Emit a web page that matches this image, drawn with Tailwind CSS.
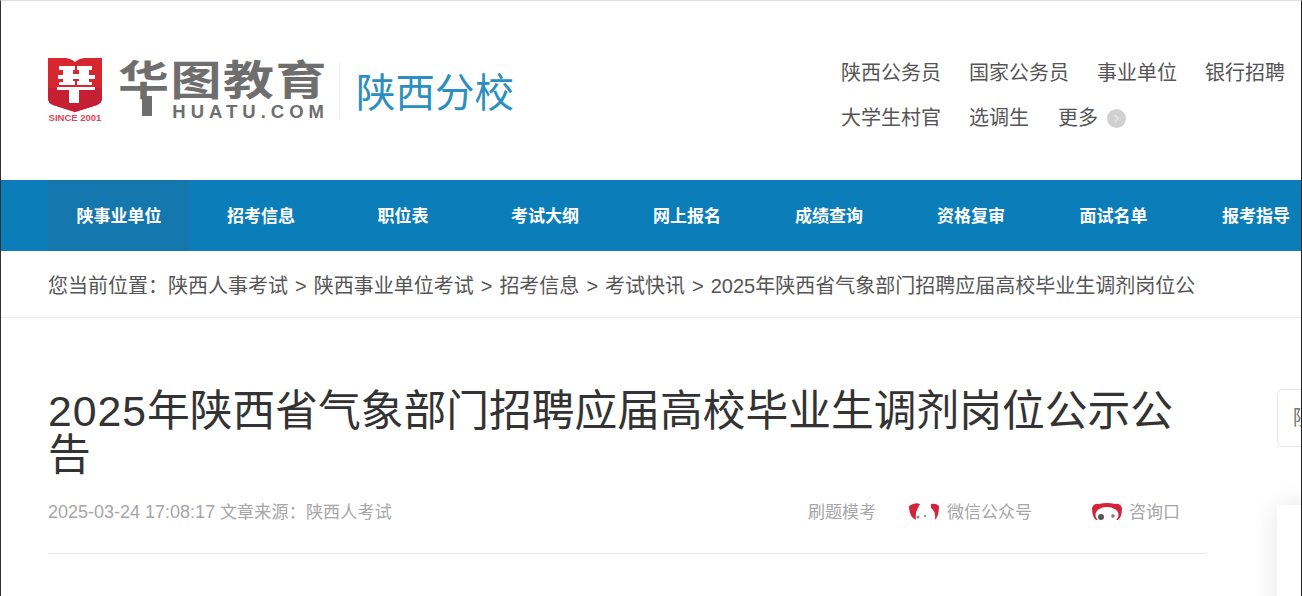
<!DOCTYPE html>
<html lang="zh-CN">
<head>
    <meta charset="UTF-8">
    <meta name="viewport" content="width=device-width, initial-scale=1.0">
    <title>2025年陕西省气象部门招聘应届高校毕业生调剂岗位公示公告</title>
    <script src="https://cdn.jsdelivr.net/npm/@tailwindcss/browser@4"></script>
</head>
<body class="bg-white overflow-hidden font-['Liberation_Sans','Noto_Sans_CJK_SC',sans-serif]">
<div class="relative w-[1302px] h-[596px] overflow-hidden border-l border-r border-t border-l-[#333] border-r-[#222] border-t-[#ddd]">

    <!-- header -->
    <header class="h-[179px] pl-[47px] flex justify-between">
        <div class="flex items-start pt-[57px]">
            <div class="w-[54px] flex flex-col items-center">
                <svg viewBox="0 0 54 54" class="w-[54px] h-[54px]">
                    <path d="M0 0H18Q24 1 27 4Q30 1 36 0H54V40Q54 45 49 47L27 54L5 47Q0 45 0 40Z" fill="#d8262f"/>
                    <path d="M0 30H54V40Q54 45 49 47L27 54L5 47Q0 45 0 40Z" fill="#c41f33"/>
                    <path d="M11 8H27V12H25V16H31V12H29V8H44V12H41V17H47V21H41V24H44V27H29V23H31V21H25V23H27V27H11V24H15V21H10V17H15V12H11Z" fill="#fff"/>
                    <path d="M9 29H47V32H31V45H21V32H9Z" fill="#fff"/>
                </svg>
                <span class="text-[9.5px] leading-[10px] font-bold text-[#d9475a] mt-[1px] whitespace-nowrap">SINCE 2001</span>
            </div>
            <div class="relative ml-[18px] w-[206px] h-[62px] flex flex-col items-end">
                <span class="mt-[4px] -mr-[2px] text-[51px] leading-[48px] font-bold text-[#6e6e6e] tracking-[1.5px] whitespace-nowrap origin-top scale-y-[0.8]">华图教育</span>
                <span class="absolute left-[22px] top-[38px] w-[10px] h-[20px] bg-[#6e6e6e]"></span>
                <span class="absolute right-0 top-[45px] text-[18.5px] leading-[18px] font-bold text-[#6e6e6e] tracking-[5px] -mr-[3px] whitespace-nowrap">HUATU.COM</span>
            </div>
            <div class="w-px h-[58px] bg-[#eeeeee] ml-[13px] mt-[4px]"></div>
            <span class="ml-[16px] mt-[11px] text-[39.5px] leading-[48px] text-[#2b8fc0] whitespace-nowrap">陕西分校</span>
        </div>
        <nav class="pt-[50px] pr-[16px] text-[#555] text-[20px] leading-[45px] w-[460px] shrink-0">
            <div class="flex justify-between whitespace-nowrap">
                <a>陕西公务员</a><a>国家公务员</a><a>事业单位</a><a>银行招聘</a>
            </div>
            <div class="flex items-center whitespace-nowrap">
                <a>大学生村官</a><a class="ml-[28px]">选调生</a><a class="ml-[29px]">更多</a>
                <span class="ml-[9px] w-[19px] h-[19px] rounded-full bg-[#d0d0d0] flex items-center justify-center">
                    <svg viewBox="0 0 10 10" class="w-[9px] h-[9px]"><path d="M3 1.5 7 5 3 8.5" fill="none" stroke="#e8e8e8" stroke-width="1.5"/></svg>
                </span>
            </div>
        </nav>
    </header>

    <!-- blue nav -->
    <div class="h-[71px] bg-[#0b7db8] pl-[47px] flex text-white text-[17px] font-bold whitespace-nowrap">
        <a class="w-[142px] shrink-0 pt-[2px] bg-[#1477ae] flex items-center justify-center">陕事业单位</a>
        <a class="w-[142px] shrink-0 pt-[2px] flex items-center justify-center">招考信息</a>
        <a class="w-[142px] shrink-0 pt-[2px] flex items-center justify-center">职位表</a>
        <a class="w-[142px] shrink-0 pt-[2px] flex items-center justify-center">考试大纲</a>
        <a class="w-[142px] shrink-0 pt-[2px] flex items-center justify-center">网上报名</a>
        <a class="w-[142px] shrink-0 pt-[2px] flex items-center justify-center">成绩查询</a>
        <a class="w-[142px] shrink-0 pt-[2px] flex items-center justify-center">资格复审</a>
        <a class="w-[143px] shrink-0 pt-[2px] flex items-center justify-center">面试名单</a>
        <a class="w-[142px] shrink-0 pt-[2px] flex items-center justify-center">报考指导</a>
    </div>

    <!-- breadcrumb -->
    <div class="h-[67px] pl-[47px] pt-[3px] flex items-center border-b border-[#ececec] text-[20px] text-[#555] whitespace-nowrap">
        <span>您当前位置：</span><a>陕西人事考试</a>
        <span class="mx-[7px]">&gt;</span><a>陕西事业单位考试</a>
        <span class="mx-[7px]">&gt;</span><a>招考信息</a>
        <span class="mx-[7px]">&gt;</span><a>考试快讯</a>
        <span class="mx-[7px]">&gt;</span><a>2025年陕西省气象部门招聘应届高校毕业生调剂岗位公</a>
    </div>

    <!-- article head -->
    <main class="pl-[47px] pt-[71px] w-[1205px]">
        <h1 class="text-[42.75px] leading-[44px] text-[#333] font-normal"><span class="tracking-[1px]">2025</span>年陕西省气象部门招聘应届高校毕业生调剂岗位公示公告</h1>
        <div class="mt-[23px] pb-[28px] border-b border-[#e6e6e6] flex items-center text-[17px] leading-[24px] text-[#a6a6a6] whitespace-nowrap">
            <span><span class="text-[18px]">2025-03-24 17:08:17</span> <span class="tracking-[0.2px]">文章来源：陕西人考试</span></span>
            <span class="ml-auto">刷题模考</span>
            <span class="ml-[33px] flex items-center gap-[8px]">
                <svg viewBox="0 0 30 20" class="w-[30px] h-[20px]">
                    <path d="M0 3Q6 -1 11 1L9 5Q6 9 7 17Q0 14 0 3Z" fill="#d3243a"/>
                    <path d="M22 1Q27 0 30 3Q30 13 26 17Q27 8 22 5Z" fill="#d3243a"/>
                    <circle cx="9" cy="14" r="1.5" fill="#888"/>
                    <circle cx="16" cy="13" r="1.2" fill="#999"/>
                </svg>
                微信公众号
            </span>
            <span class="ml-[60px] mr-[26px] flex items-center gap-[7px]">
                <svg viewBox="0 0 30 20" class="w-[30px] h-[20px]">
                    <path d="M0 5Q2 0 7 1Q15 -1 23 1Q28 0 30 5Q30 14 26 17L4 17Q0 14 0 5Z" fill="#d3243a"/>
                    <ellipse cx="15" cy="12" rx="11.5" ry="8" fill="#fff"/>
                    <circle cx="9" cy="14" r="3" fill="#555"/>
                    <circle cx="21" cy="13" r="1.8" fill="#777"/>
                </svg>
                咨询口
            </span>
        </div>
    </main>

    <!-- floating side boxes, cut off by the window -->
    <div class="absolute left-[1276px] top-[388px] w-[60px] h-[58px] border border-[#e6e6e6] rounded-[6px] bg-white flex items-center pl-[15px] text-[20px] text-[#777]">陕</div>
    <div class="absolute left-[1276px] top-[504px] w-[60px] h-[120px] bg-white shadow-[0_0_24px_rgba(0,0,0,0.1)]"></div>
</div>
</body>
</html>
